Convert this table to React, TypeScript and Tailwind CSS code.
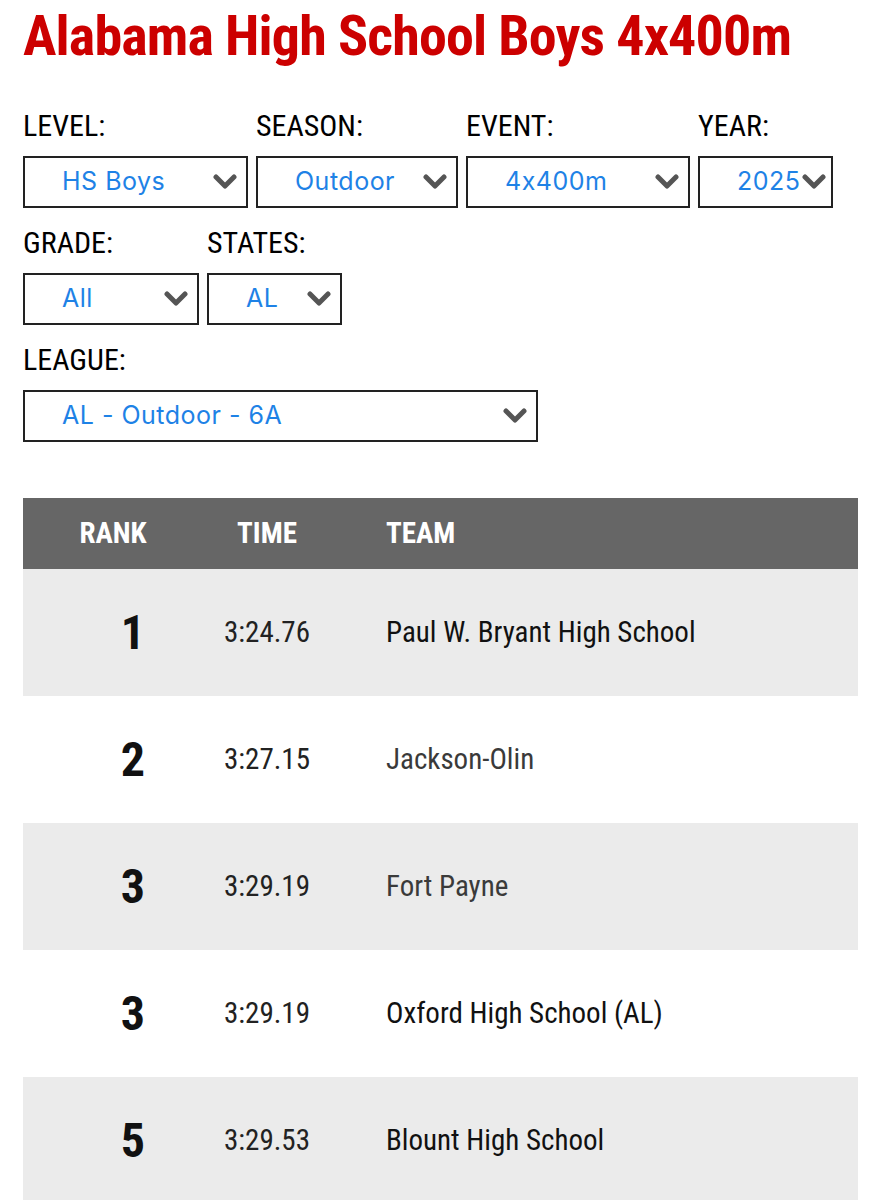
type Row = { rank: string; time: string; team: string; linked: boolean };

const rows: Row[] = [
  { rank: "1", time: "3:24.76", team: "Paul W. Bryant High School", linked: true },
  { rank: "2", time: "3:27.15", team: "Jackson-Olin", linked: false },
  { rank: "3", time: "3:29.19", team: "Fort Payne", linked: false },
  { rank: "3", time: "3:29.19", team: "Oxford High School (AL)", linked: true },
  { rank: "5", time: "3:29.53", team: "Blount High School", linked: true },
];

function Chevron() {
  return (
    <svg width="24" height="16" viewBox="0 0 24 16" className="shrink-0">
      <polyline points="3,3 12,12 21,3" fill="none" stroke="#555" strokeWidth="5" strokeLinecap="round" strokeLinejoin="round" />
    </svg>
  );
}

function Select({ value, width, chevronOverlap = false }: { value: string; width: string; chevronOverlap?: boolean }) {
  return (
    <div className={`${width} flex h-[52px] items-center border-2 border-[#222] bg-white pl-[37px] ${chevronOverlap ? "pr-[5px]" : "pr-[9px]"}`}>
      <span className="flex-1 whitespace-nowrap font-['Inter',sans-serif] text-[25px] tracking-[0.5px] text-[#1e82e6] [font-feature-settings:'calt'_0]">
        {value}
      </span>
      {chevronOverlap ? (
        <span className="-ml-[30px] flex">
          <Chevron />
        </span>
      ) : (
        <Chevron />
      )}
    </div>
  );
}

function Field({ label, children }: { label: string; children: React.ReactNode }) {
  return (
    <div className="flex flex-col">
      <div className="mb-[15px] text-[30px] leading-[30px] text-black">{label}</div>
      {children}
    </div>
  );
}

export default function App() {
  return (
    <div className="min-h-[1200px] bg-white font-['Roboto_Condensed','Roboto',sans-serif]">
      <div className="px-[23px] pt-[8px]">
        <h1 className="text-[56px] font-bold leading-[56px] tracking-[-0.85px] text-[#cc0000]">
          Alabama High School Boys 4x400m
        </h1>

        <div className="mt-[47px] flex gap-[8px]">
          <Field label="LEVEL:">
            <Select value="HS Boys" width="w-[225px]" />
          </Field>
          <Field label="SEASON:">
            <Select value="Outdoor" width="w-[202px]" />
          </Field>
          <Field label="EVENT:">
            <Select value="4x400m" width="w-[224px]" />
          </Field>
          <Field label="YEAR:">
            <Select value="2025" width="w-[135px]" chevronOverlap />
          </Field>
        </div>

        <div className="mt-[20px] flex gap-[8px]">
          <Field label="GRADE:">
            <Select value="All" width="w-[176px]" />
          </Field>
          <Field label="STATES:">
            <Select value="AL" width="w-[135px]" />
          </Field>
        </div>

        <div className="mt-[20px] flex">
          <Field label="LEAGUE:">
            <Select value="AL - Outdoor - 6A" width="w-[515px]" />
          </Field>
        </div>

        <div className="mt-[56px]">
          <div className="flex h-[71px] items-center bg-[#666666] text-[29px] font-bold text-white">
            <div className="w-[180px] text-center">RANK</div>
            <div className="w-[128px] text-center">TIME</div>
            <div className="pl-[55px]">TEAM</div>
          </div>
          {rows.map((r, i) => (
            <div
              key={i}
              className={`flex h-[127px] items-center ${i % 2 === 0 ? "bg-[#ebebeb]" : "bg-white"}`}
            >
              <div className="w-[180px] pl-[40px] text-center text-[48px] font-bold text-[#111]">{r.rank}</div>
              <div className="w-[128px] text-center text-[29px] text-[#222]">{r.time}</div>
              <div className={`pl-[55px] text-[29px] ${r.linked ? "text-[#111]" : "text-[#3a3a3a]"}`}>{r.team}</div>
            </div>
          ))}
        </div>
      </div>
    </div>
  );
}
